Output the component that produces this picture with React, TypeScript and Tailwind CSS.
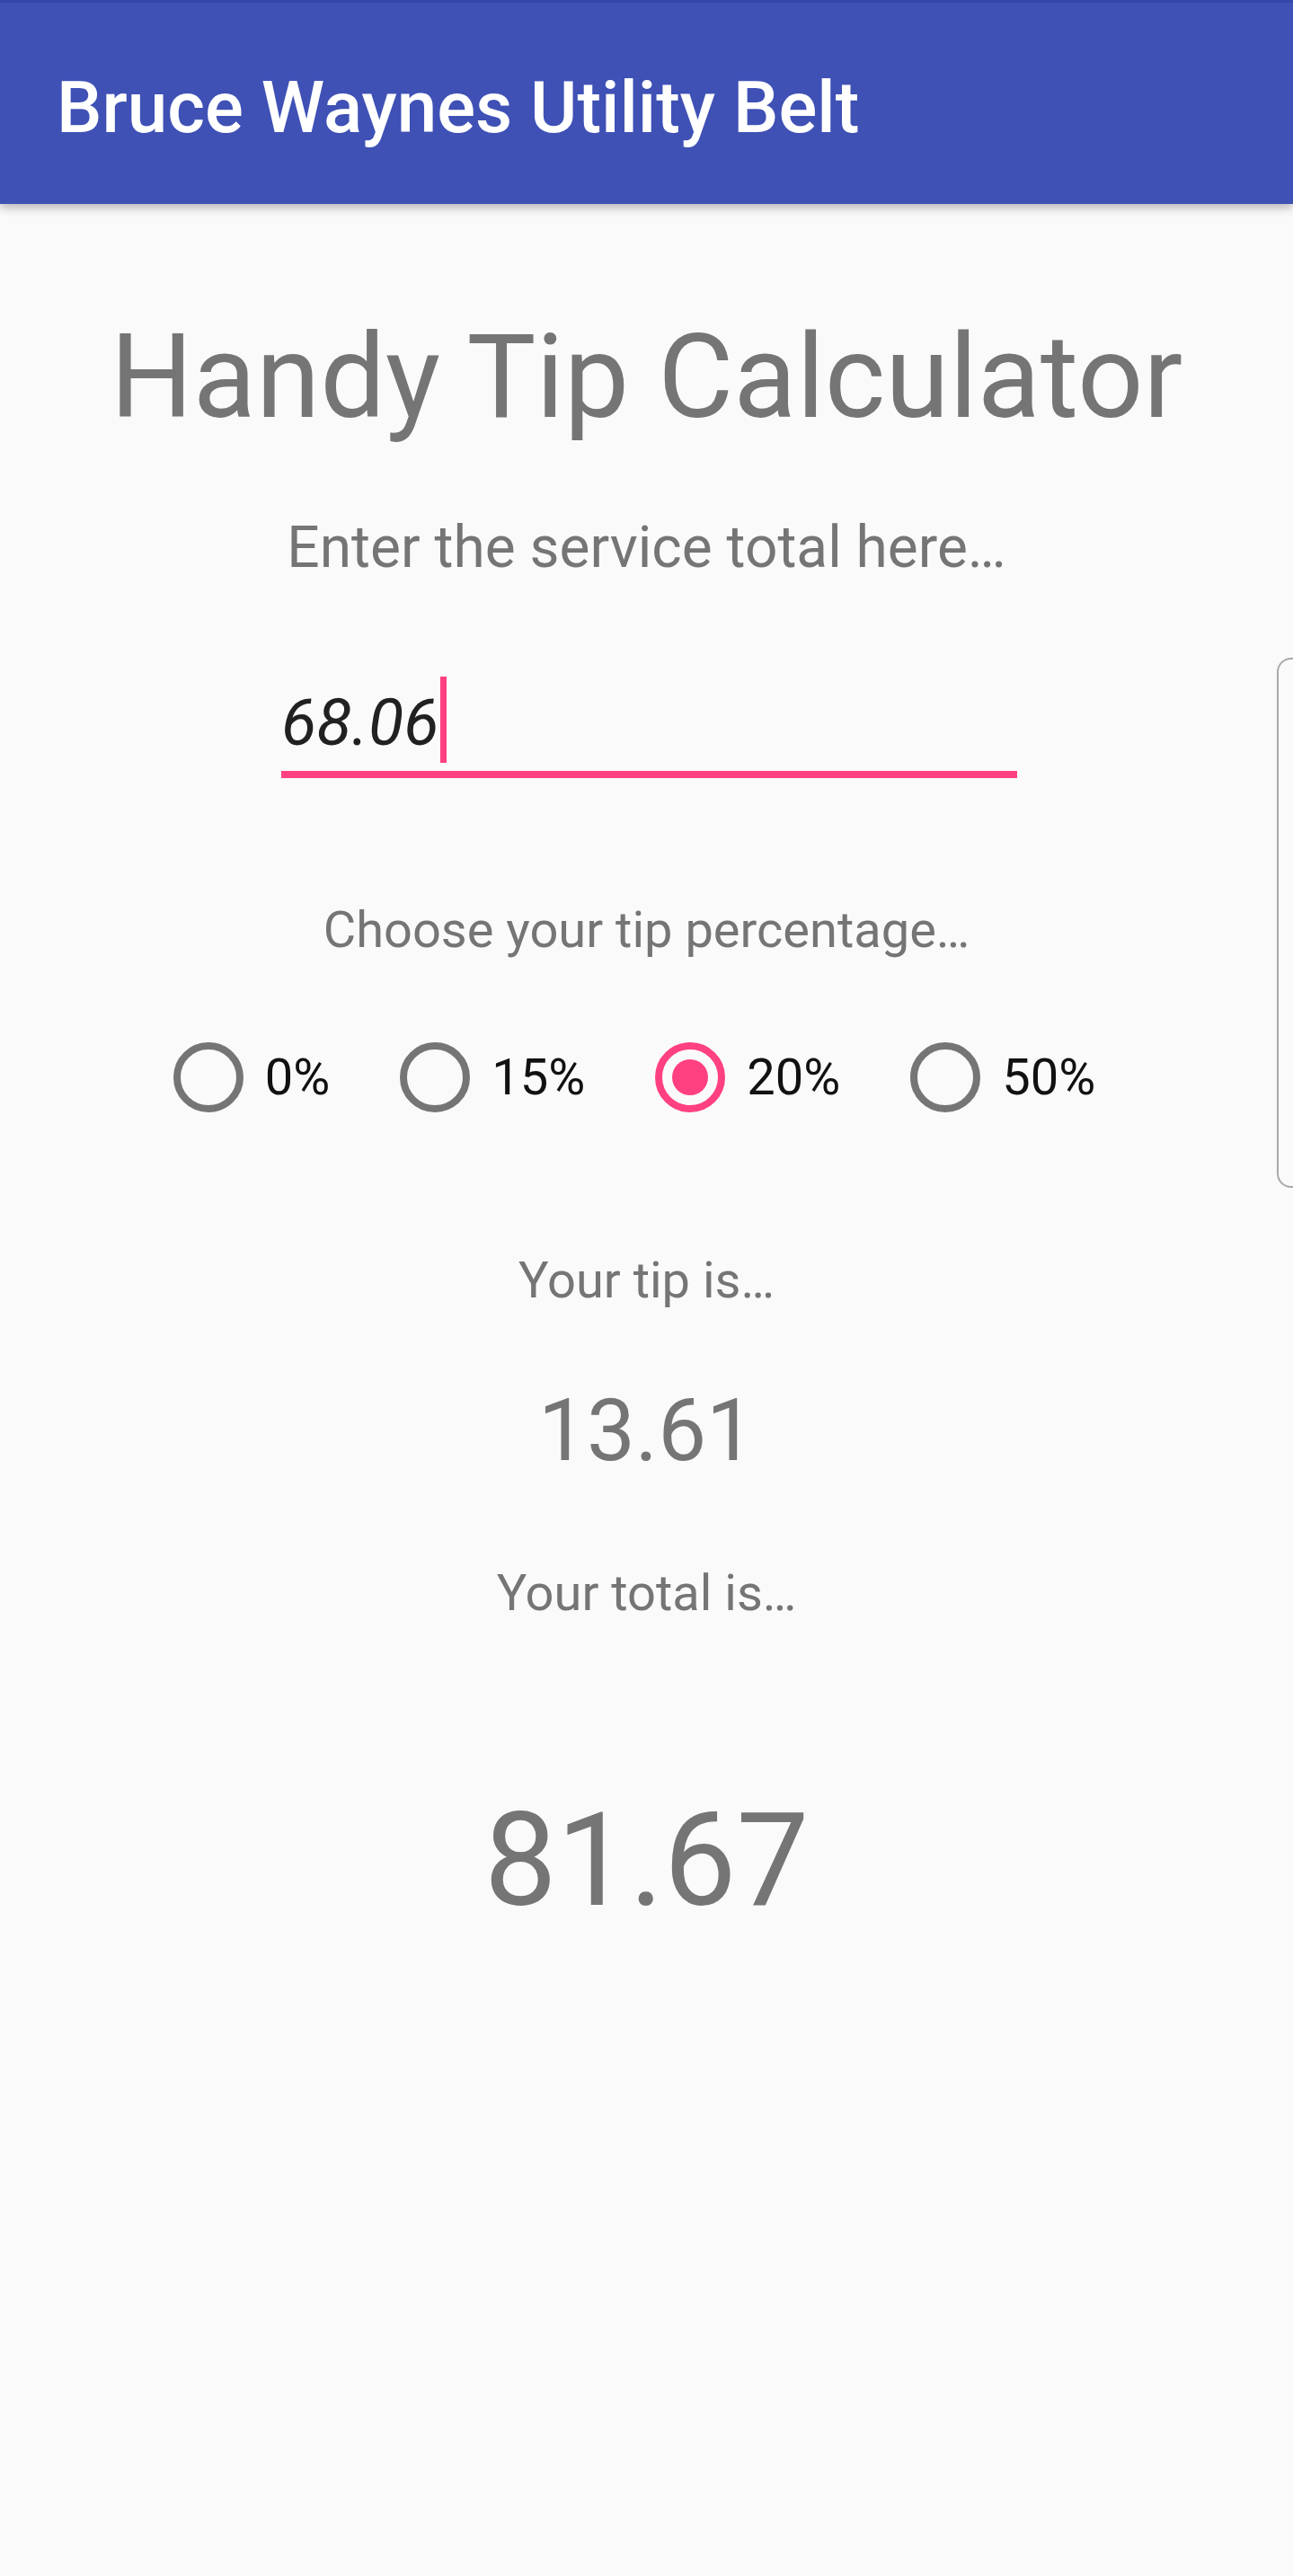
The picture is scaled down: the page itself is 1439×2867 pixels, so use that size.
import { useState } from 'react';

const TIP_OPTIONS = [0, 15, 20, 50];

function Radio({ label, checked, onSelect }: { label: string; checked: boolean; onSelect: () => void }) {
  return (
    <button type="button" onClick={onSelect} className="flex items-center">
      <span
        className={`flex h-[78px] w-[78px] items-center justify-center rounded-full border-[8px] ${
          checked ? 'border-[#ff4081]' : 'border-[#757575]'
        }`}
      >
        {checked && <span className="h-[40px] w-[40px] rounded-full bg-[#ff4081]" />}
      </span>
      <span className="ml-[24px] text-[56px] leading-none text-[#111111]">{label}</span>
    </button>
  );
}

export default function App() {
  const [amount] = useState('68.06');
  const [tipPercent, setTipPercent] = useState(20);

  const base = parseFloat(amount) || 0;
  const tip = (base * tipPercent) / 100;
  const total = base + tip;

  return (
    <div className="relative min-h-[2867px] overflow-hidden bg-[#fafafa] font-['Roboto',sans-serif]">
      {/* App bar */}
      <header className="relative z-10 h-[227px] bg-[#3f51b5] shadow-[0_4px_10px_rgba(0,0,0,0.28)]">
        <div className="h-[3px] bg-[#3345a6]" />
        <h1 className="pl-[63px] pt-[77px] text-[80px] font-medium leading-none text-white">
          Bruce Waynes Utility Belt
        </h1>
      </header>

      <main className="flex flex-col items-center">
        <h2 className="mt-[128px] text-[129px] font-normal leading-none text-[#757575]">Handy Tip Calculator</h2>

        <p className="mt-[94px] text-[64px] leading-none text-[#757575]">Enter the service total here…</p>

        {/* Amount field */}
        <div className="mt-[111px] w-[819px] translate-x-[3px]">
          <div className="flex items-start">
            <span className="mt-[16px] text-[72px] italic leading-none text-[#212121]">{amount}</span>
            <span className="ml-[2px] h-[96px] w-[7px] bg-[#ff4081]" />
          </div>
          <div className="mt-[9px] h-[8px] bg-[#ff4081]" />
        </div>

        <p className="mt-[141px] text-[56px] leading-none text-[#757575]">Choose your tip percentage…</p>

        <div className="mt-[97px] flex gap-[78px] pr-[27px]">
          {TIP_OPTIONS.map((p) => (
            <Radio key={p} label={`${p}%`} checked={tipPercent === p} onSelect={() => setTipPercent(p)} />
          ))}
        </div>

        <p className="mt-[159px] text-[56px] leading-none text-[#757575]">Your tip is…</p>
        <p className="mt-[91px] text-[96px] leading-none text-[#757575]">{tip.toFixed(2)}</p>

        <p className="mt-[105px] text-[56px] leading-none text-[#757575]">Your total is…</p>
        <p className="mt-[198px] text-[144px] leading-none text-[#757575]">{total.toFixed(2)}</p>
      </main>

      {/* Edge panel handle */}
      <div className="absolute right-0 top-[732px] h-[590px] w-[18px] rounded-l-[16px] border-y-2 border-l-2 border-[#a9a9a9]" />
    </div>
  );
}
